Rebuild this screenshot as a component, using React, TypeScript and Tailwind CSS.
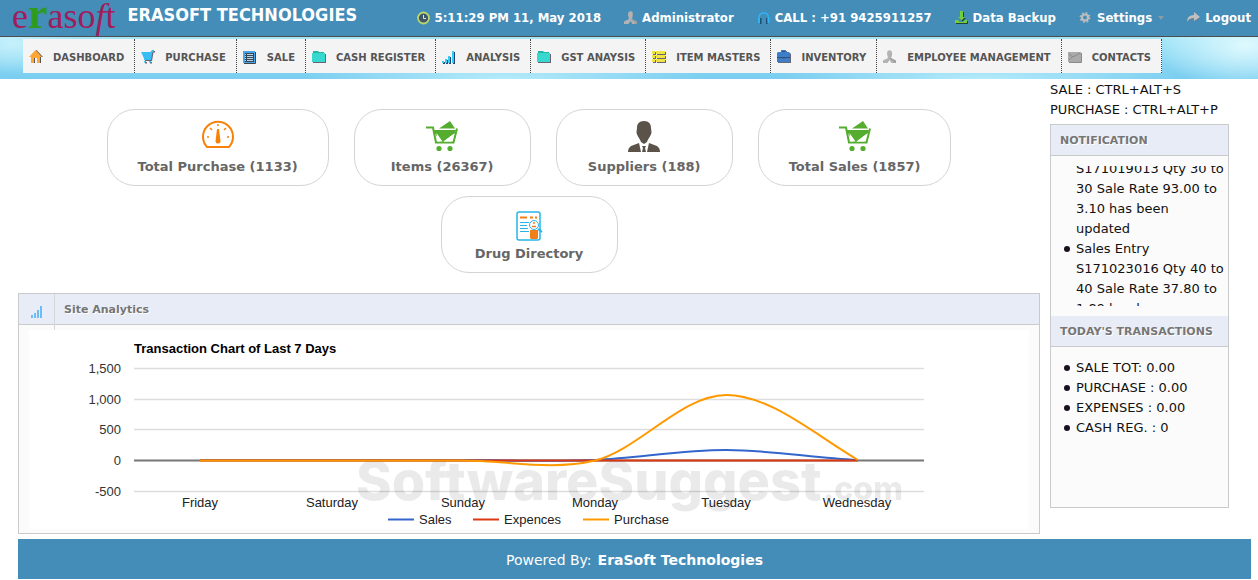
import type { ReactNode } from "react";

const Svg = ({ children, className = "" }: { children: ReactNode; className?: string }) => (
  <svg viewBox="0 0 14 14" className={`h-3.5 w-3.5 shrink-0 ${className}`} aria-hidden="true">
    {children}
  </svg>
);

const shade = "overflow-visible drop-shadow-[1px_1px_0_#667]";

const HomeIcon = () => (
  <Svg className="overflow-visible drop-shadow-[1px_0_0_#555]">
    <path fill="#ffa733" d="M6.500 0 13 7h-2v6H8V8H5v5H2V7H0z" />
  </Svg>
);

const CartIcon = () => (
  <Svg className={shade}>
    <path fill="#39bdf5" d="M0 2h9.500L11 0h2v1.500h-1.500L10 10H3V8.500L1 4z" />
    <path fill="#39bdf5" d="M3 11h2v1.500H3zM8 11h2v1.500H8z" />
  </Svg>
);

const LedgerIcon = () => (
  <Svg>
    <path fill="#4ba3ea" d="M0 1h12v12H0z" />
    <path fill="#3c4650" d="M2 3h9v9H2z" />
    <path stroke="#b4d3ec" d="M2 4.500h1M4 4.500h6M2 6.500h1M4 6.500h6M2 8.500h1M4 8.500h6M2 10.500h1M4 10.500h6" />
    <path fill="none" stroke="#444" d="M12.500 2v11.500H1" />
  </Svg>
);

const FolderIcon = () => (
  <Svg className={shade}>
    <path fill="#25b5a5" d="M1 1h5l1 1h5v1H1z" />
    <path fill="#39d8cf" d="M0 3h13v9H0z" />
  </Svg>
);

const BarsIcon = () => (
  <Svg className="overflow-visible drop-shadow-[1px_1px_0_#247]">
    <path fill="#35cdf5" d="M0 11h2v2H0zM3 9h2v4H3zM6 6h2v7H6zM10 1h2v12h-2z" />
  </Svg>
);

const RowsIcon = () => (
  <Svg className={shade}>
    <path fill="#f0e442" d="M0 1h3v3H0zM4 1h9v3H4zM0 5h3v3H0zM4 5h9v3H4zM0 9h3v3H0zM4 9h9v3H4z" />
  </Svg>
);

const CaseIcon = () => (
  <Svg className={shade}>
    <path fill="#3b7fcb" d="M4 0h5v2h3l1 1v4H0V3l1-1h3zM0 8h5v1h3V8h5v4H0z" />
    <path fill="#2a4f86" d="M5 1h3v1H5zM0 7h13v1H0z" />
  </Svg>
);

const PersonIcon = () => (
  <Svg>
    <path fill="#b3b3b3" d="M4.500 1Q6.500-.5 8.500 1L9 4 8 8l5 2.500V13H8.500L6.500 10 4.500 13H0v-2.500L5 8 4 4z" />
    <path fill="#8f8f8f" d="M8.500 1 9 4 8 8l5 2.500V13h-2l-1-2-3-2 1-3z" opacity=".5" />
  </Svg>
);

const MailIcon = () => (
  <Svg>
    <path fill="#aaa" d="M0 2h13v10H0z" />
    <path fill="none" stroke="#8a8a8a" d="m1 10 4-4M1 4l4 3 7-4M13.500 3v9.500H1" />
  </Svg>
);

const ClockIcon = () => (
  <Svg>
    <circle cx="6.500" cy="7" r="5.500" fill="#40566b" stroke="#b9d66b" strokeWidth="1.800" />
    <path d="M6.500 4v3.500H9" fill="none" stroke="#dff0c0" />
  </Svg>
);

const HeadsetIcon = () => (
  <Svg>
    <path d="M2 9V6a4.800 4.800 0 0 1 9.500 0v3" fill="none" stroke="#2cb4f4" strokeWidth="1.500" />
    <path fill="#1d4e74" d="M3 7h1.500v6H3zM9 7h1.500v6H9z" />
    <path fill="#2cb4f4" d="M1 7h2v5H1zM10.500 7h2v5h-2z" />
  </Svg>
);

const DownloadIcon = () => (
  <Svg className="overflow-visible drop-shadow-[1px_1px_0_#243]">
    <path fill="#71cf3d" d="M5 0h3v6h2L6.500 9.500 3 6h2zM0 9h3l2 2h3l2-2h2v3H0z" />
  </Svg>
);

const GearIcon = () => (
  <Svg>
    <circle cx="6" cy="6.500" r="4.500" fill="none" stroke="#b3b8bf" strokeWidth="2" strokeDasharray="1.800 1.734" />
    <circle cx="6" cy="6.500" r="3" fill="none" stroke="#bdbdbd" strokeWidth="2.200" />
  </Svg>
);

const ShareIcon = () => (
  <Svg>
    <path fill="#6b7f95" d="M1 12q0-7 7-7V2l5 5-5 4V8Q3 8 1 12z" />
    <path fill="#c0c0c0" d="M0 11q0-7 7-7V1l6 5-6 4V7Q2 7 0 11z" />
  </Svg>
);

const GaugeIcon = () => (
  <svg viewBox="0 0 32 32" className="h-8 w-8" aria-hidden="true">
    <path d="M5 27a15 15 0 1 1 22 0z" fill="none" stroke="#f7820a" strokeWidth="2" />
    <path fill="#f7820a" d="M15 9h2l1.500 12a2 2 0 0 1-5 0z" />
    <path d="M16 4v2M8 8l2 2M24 8l-2 2M5 17h2M25 17h2" stroke="#f7820a" strokeWidth="1.500" />
  </svg>
);

const BasketIcon = () => (
  <svg viewBox="0 0 32 32" className="h-8 w-8" aria-hidden="true">
    <path fill="#54ad2f" d="m13 8.500 11-7.500 5 7.500z" />
    <path d="M0 7.500h7l3 15h17.500l3.500-14" fill="none" stroke="#54ad2f" strokeWidth="2" />
    <path fill="#54ad2f" d="M7 10h23l-1 3-12 9h-3z" />
    <path fill="#fff" d="m10.500 13 6 8.500h-5z" />
    <path fill="#fff" d="m27.500 14-2 7.500h-8z" />
    <circle cx="13" cy="28.500" r="2.600" fill="#54ad2f" />
    <circle cx="24" cy="28.500" r="2.600" fill="#54ad2f" />
  </svg>
);

const SupplierIcon = () => (
  <svg viewBox="0 0 32 32" className="h-8 w-8" aria-hidden="true">
    <path fill="#5b5249" d="M16 1c5 0 7 3 7 7l.5 4C23.500 15 20 19 19 22l-3 2-3-2c-1-3-4.500-7-4.500-10L9 8c0-4 2-7 7-7z" />
    <path fill="#5b5249" d="M11 23 3 26q-3 2-3 6h13zM21 23l8 3q3 2 3 6H19zM14 26h4l-1 2 1 4h-4l1-4z" />
  </svg>
);

const DirectoryIcon = () => (
  <svg viewBox="0 -2 32 32" className="h-8 w-8 overflow-visible" aria-hidden="true">
    <rect x="4" y="3" width="23" height="28" rx="2" fill="none" stroke="#29b4e8" strokeWidth="1.500" />
    <path d="M7 8.500h7M17 8.500h3M22 8.500h2" stroke="#ef7f1a" strokeWidth="2" />
    <path d="M7 13.500h9M7 16.500h7M7 19.500h8M7 22.500h9" stroke="#29b4e8" />
    <path fill="#ef7f1a" d="M17 21h8v8l-1 1h-6l-1-1z" />
    <circle cx="21" cy="16" r="4.500" fill="#fff" stroke="#29b4e8" />
    <path d="M20 14h2M19 17.500h4" stroke="#ef7f1a" strokeWidth="1.500" />
    <path d="m25 20 4 3" stroke="#29b4e8" strokeWidth="2" />
  </svg>
);

const menu = [
  { label: "DASHBOARD", icon: <HomeIcon /> },
  { label: "PURCHASE", icon: <CartIcon /> },
  { label: "SALE", icon: <LedgerIcon /> },
  { label: "CASH REGISTER", icon: <FolderIcon /> },
  { label: "ANALYSIS", icon: <BarsIcon /> },
  { label: "GST ANAYSIS", icon: <FolderIcon /> },
  { label: "ITEM MASTERS", icon: <RowsIcon /> },
  { label: "INVENTORY", icon: <CaseIcon /> },
  { label: "EMPLOYEE MANAGEMENT", icon: <PersonIcon /> },
  { label: "CONTACTS", icon: <MailIcon /> },
];

const cards = [
  { label: "Total Purchase (1133)", icon: <GaugeIcon /> },
  { label: "Items (26367)", icon: <BasketIcon /> },
  { label: "Suppliers (188)", icon: <SupplierIcon /> },
  { label: "Total Sales (1857)", icon: <BasketIcon /> },
  { label: "Drug Directory", icon: <DirectoryIcon /> },
];

const totals = ["SALE TOT: 0.00", "PURCHASE : 0.00", "EXPENSES : 0.00", "CASH REG. : 0"];

const yTicks = [
  { label: "1,500", y: 38 },
  { label: "1,000", y: 69 },
  { label: "500", y: 99 },
  { label: "0", y: 130 },
  { label: "-500", y: 161 },
];

const days = [
  { label: "Friday", x: 171 },
  { label: "Saturday", x: 303 },
  { label: "Sunday", x: 434 },
  { label: "Monday", x: 566 },
  { label: "Tuesday", x: 697 },
  { label: "Wednesday", x: 828 },
];

const legend = [
  { label: "Sales", x: 359, color: "#3366cc" },
  { label: "Expences", x: 444, color: "#dc3912" },
  { label: "Purchase", x: 554, color: "#ff9900" },
];

const Header = () => (
  <header className="flex h-[37px] items-center justify-between border-b border-[#4d4d4d] bg-[#438db8] pr-[7px] pl-3 text-white">
    <div className="flex items-center gap-3">
      <a href="#" className="flex h-10 items-baseline font-['Liberation_Serif',serif] text-[36px] leading-8 text-[#a01c5c]">
        <span>e</span>
        <span className="text-[44px] font-bold text-[#2e9b1f]">r</span>
        <span>aso</span>
        <span className="italic">f</span>
        <span>t</span>
      </a>
      <h1 className="pb-1.5 font-['DejaVu_Sans_Condensed','DejaVu_Sans',sans-serif] text-[18px] leading-7 font-bold whitespace-nowrap">
        ERASOFT TECHNOLOGIES
      </h1>
    </div>
    <div className="flex items-center gap-[23px] font-['DejaVu_Sans_Condensed','DejaVu_Sans',sans-serif] text-[13px] font-bold whitespace-nowrap">
      <span className="flex items-center gap-1"><ClockIcon />5:11:29 PM 11, May 2018</span>
      <a href="#" className="flex items-center gap-1"><PersonIcon />Administrator</a>
      <a href="#" className="flex items-center gap-1"><HeadsetIcon />CALL : +91 9425911257</a>
      <a href="#" className="flex items-center gap-1"><DownloadIcon />Data Backup</a>
      <button type="button" className="flex items-center gap-1">
        <GearIcon />Settings
        <span className="ml-0.5 border-x-3 border-t-4 border-x-transparent border-t-[#8c9aa5]" />
      </button>
      <a href="#" className="flex items-center gap-1"><ShareIcon />Logout</a>
    </div>
  </header>
);

const Menu = () => (
  <div className="h-[42px] bg-[radial-gradient(90px_44px_at_99%_20%,#def9fe,transparent),radial-gradient(60px_30px_at_1%_15%,#c5f0fb,transparent),radial-gradient(200px_30px_at_40%_100%,#b5ebfa,transparent),radial-gradient(200px_24px_at_78%_100%,#b5ebfa,transparent),linear-gradient(180deg,#a5e6f8,#79cdf0)] pt-[2px] pl-[23px]">
    <nav className="flex h-[34px] w-fit bg-[#f4f4f4]">
      {menu.map((item) => (
        <a
          key={item.label}
          href="#"
          className="flex items-center gap-[10px] border-r border-dotted border-[#444] pt-0.5 pr-[10px] pl-[6px] text-[10px] font-bold whitespace-nowrap text-[#555]"
        >
          {item.icon}
          {item.label}
        </a>
      ))}
    </nav>
  </div>
);

const Chart = () => (
  <svg viewBox="0 0 1000 199" className="block w-full bg-white font-['Liberation_Sans',sans-serif] text-[13px]" role="img" aria-label="Transaction Chart of Last 7 Days">
    <text x="105" y="23" fontWeight="bold">Transaction Chart of Last 7 Days</text>
    {yTicks.map((tick) => (
      <g key={tick.label}>
        <path d={`M105 ${tick.y}.500H895`} stroke={tick.label === "0" ? "#777" : "#ddd"} strokeWidth={tick.label === "0" ? 2 : 1.5} />
        <text x="92" y={tick.y + 5} textAnchor="end" fill="#333">{tick.label}</text>
      </g>
    ))}
    <g fill="#000" opacity=".08" className="font-['Inter',sans-serif]" fontWeight="800">
      <text x="327" y="170" fontSize="54">SoftwareSuggest</text>
      <text x="794" y="170" fontSize="32">.com</text>
    </g>
    <g fill="none" strokeWidth="2">
      <path stroke="#3366cc" d="M171 130H434C478 130 522 132 566 130C609 128 653 120 697 120S785 128 828 130" />
      <path stroke="#dc3912" d="M171 130.500H829" />
      <path stroke="#ff9900" d="M171 130.500H434C478 130.500 522 141 566 130.500C609 120 653 65 697 65S785 104 829 130" />
    </g>
    {days.map((day) => (
      <text key={day.label} x={day.x} y="177" textAnchor="middle" fill="#222">{day.label}</text>
    ))}
    {legend.map((item) => (
      <g key={item.label}>
        <path d={`M${item.x} 189.500h26`} stroke={item.color} strokeWidth="2" />
        <text x={item.x + 31} y="194" fill="#222">{item.label}</text>
      </g>
    ))}
  </svg>
);

const Bullet = ({ children }: { children: ReactNode }) => (
  <li className="flex gap-[6px] pl-[13px]">
    <span className="mt-[7px] h-1.5 w-1.5 shrink-0 rounded-full bg-[#1a1020]" />
    <span>{children}</span>
  </li>
);

const SideTitle = ({ children }: { children: ReactNode }) => (
  <h2 className="border-b border-[#c8cacc] bg-[#e8ecf7] pt-[6px] pb-1 pl-[9px] text-[11px] leading-5 font-bold whitespace-nowrap text-[#767676] [text-shadow:1px_1px_0_white]">
    {children}
  </h2>
);

const Sidebar = () => (
  <aside className="w-[179px] shrink-0 pt-px text-[13px] leading-5 text-[#111]">
    <p className="whitespace-nowrap">SALE : CTRL+ALT+S</p>
    <p className="whitespace-nowrap">PURCHASE : CTRL+ALT+P</p>
    <div className="mt-1 border border-[#c8cacc] bg-[#fbfbfb]">
      <SideTitle>NOTIFICATION</SideTitle>
      <div className="mt-[10px] h-[140px] overflow-hidden">
        <ul className="-mt-[27px]">
          <Bullet>
            Sales Entry S171019013 Qty 30 to 30 Sale Rate 93.00 to 3.10 has been
            <br />
            updated
          </Bullet>
          <Bullet>
            Sales Entry S171023016 Qty 40 to 40 Sale Rate 37.80 to 1.89 has been
            <br />
            updated
          </Bullet>
        </ul>
      </div>
      <div className="mt-[10px]">
        <SideTitle>TODAY'S TRANSACTIONS</SideTitle>
      </div>
      <ul className="pt-[11px] pb-[69px]">
        {totals.map((total) => (
          <Bullet key={total}>{total}</Bullet>
        ))}
      </ul>
    </div>
  </aside>
);

const App = () => {
  return (
    <div className="bg-white font-['DejaVu_Sans',sans-serif]">
      <Header />
      <Menu />
      <main className="flex gap-[10px] pr-[29px] pl-[18px]">
        <div className="min-w-0 flex-1">
          <div className="flex flex-wrap justify-center gap-x-[25px] gap-y-[10px] pt-[30px]">
            {cards.map((card) => (
              <a
                key={card.label}
                href="#"
                className="flex h-[77px] min-w-[177px] flex-col items-center rounded-[28px] border border-[#d4d4d4] px-[30px] pt-[10px] text-[13px] leading-5 font-bold whitespace-nowrap text-[#666]"
              >
                {card.icon}
                <span className="mt-[5px]">{card.label}</span>
              </a>
            ))}
          </div>
          <section className="mt-5 border border-[#c8cacc] bg-[#fbfbfb]">
            <div className="flex h-[31px] border-b border-[#c8cacc] bg-[#e8ecf7]">
              <span className="flex h-9 w-9 items-center justify-center border-r border-[#d4d6da]">
                <svg viewBox="0 0 12 12" className="h-3 w-3" aria-hidden="true">
                  <path fill="#6fbcf5" d="M0 9h2v3H0zM3 7h2v5H3zM6 4h2v8H6zM9 0h2v12H9z" />
                </svg>
              </span>
              <h2 className="pt-px pl-[9px] text-[11px] leading-[30px] font-bold text-[#767676] [text-shadow:1px_1px_0_white]">
                Site Analytics
              </h2>
            </div>
            <div className="px-[10px] pt-[5px] pb-1">
              <Chart />
            </div>
          </section>
        </div>
        <Sidebar />
      </main>
      <footer className="mt-[5px] mr-[7px] ml-[18px] flex h-10 items-center justify-center gap-1.5 bg-[#438db8] pt-0.5 text-[14px] text-white">
        Powered By: <a href="#" className="font-bold">EraSoft Technologies</a>
      </footer>
    </div>
  );
};

export default App;
